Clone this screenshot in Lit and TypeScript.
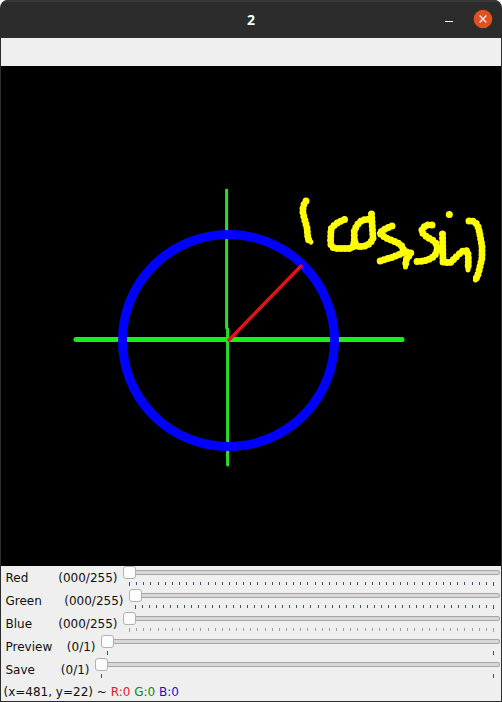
import { LitElement, html, css, svg } from "lit";
import { customElement, property } from "lit/decorators.js";

@customElement("trackbar-row")
class TrackbarRow extends LitElement {
  @property() label = "";
  @property() value = "";
  @property({ type: Number }) lead = 0;
  @property({ type: Number }) steps = 1;
  @property({ type: Boolean }) muted = false;

  static styles = css`
    :host { display: flex; height: 23px; color: #101010; }
    .caption { display: flex; justify-content: space-between; box-sizing: border-box; padding: 4px 5.5px 0 4.5px; line-height: 16px; white-space: pre; flex: none; }
    .slider { flex: 1; min-width: 0; height: 23px; display: block; }
    .tick { stroke: #30566b; stroke-width: 1; }
    .muted .tick { stroke: #a0a0a0; }
    .track { fill: #d8d8d8; stroke: #a6a6a6; }
    .thumb { fill: #fcfcfc; stroke: #b2b2b2; }
  `;

  render() {
    const width = 500 - this.lead;
    const last = width - 7.5;
    const ticks = Array.from({ length: this.steps + 1 }, (_, i) => {
      const x = Math.round(6 + ((last - 6.5) * i) / this.steps) + 0.5;
      const end = i === 0 || i === this.steps;
      return svg`<line class="tick" x1=${x} x2=${x} y1="16" y2=${end ? 20 : 19} />`;
    });
    return html`
      <div class="caption" style="width:${this.lead}px"><span>${this.label}</span><span>${this.value}</span></div>
      <svg class="slider ${this.muted ? "muted" : ""}" viewBox="0 0 ${width} 23">
        <rect class="track" x="1.5" y="4.5" width=${width - 3} height="4" rx="1.5" />
        ${ticks}
        <rect class="thumb" x="0.5" y="0.5" width="12" height="12" rx="2.5" />
      </svg>`;
  }
}

const strokes = [
  "M306 201 Q301 208 304 217 L307 228 L308 239 L311 242",
  "M344.5 219.5 Q335 223 331 229 L330.5 243 Q332 248.5 337 248.5 L351 248.5 Q355.5 245 354 232 Q358 220 366 219.5 L371 219",
  "M371.5 214 L373 238 Q371 244 365 246 L358 247 Q355 244 354.5 240",
  "M392 226 L385 229 L379.5 233 L386 238 L398 243 Q405 247 403 253 L393 257 L380 261",
  "M403 251 L411 253 L406 260 L405.5 267",
  "M432 225 Q424 224 421.5 231 Q424 236 434 241 Q440 247 435 255 Q430 261 417 261.5",
  "M442.5 234 L443 262 L450 263 L458 255 Q464 249 467 251 Q469 253 468 270",
  "M449.3 214.5 L449.5 214.5",
  "M469 221 Q477 220 479 230 L482 246 L482 258 L478.5 273 L475.5 280",
];

@customElement("app-root")
class AppRoot extends LitElement {
  static styles = css`
    :host { display: block; width: 502px; height: 702px; background: #fff; font: 12px/16px "DejaVu Sans", sans-serif; }
    .window { box-sizing: border-box; height: 702px; display: flex; flex-direction: column; background: #2c2c2c; border-radius: 8px 8px 0 0; overflow: hidden; }
    .title { box-sizing: border-box; height: 38px; flex: none; display: grid; grid-template-columns: 1fr auto 1fr; align-items: center; border-top: 2px solid #383838; color: #fff; font: bold 14px/18px "Open Sans", "Noto Sans", sans-serif; }
    .name { grid-column: 2; }
    .controls { justify-self: end; display: block; }
    .body { margin: 0 1px 1px; flex: 1; display: flex; flex-direction: column; background: #efefef; }
    .tools { height: 28px; flex: none; }
    .canvas { height: 500px; width: 500px; display: block; flex: none; background: #000; }
    .ink { fill: none; stroke: #ffff00; stroke-linecap: round; stroke-linejoin: round; stroke-width: 5; }
    .beads { stroke-width: 7; stroke-dasharray: 0 4; }
    .axis { stroke: #16f016; stroke-linecap: round; }
    .upright { stroke: #28e028; stroke-linecap: round; }
    .status { height: 20px; padding: 3px 0 0 2.5px; box-sizing: border-box; white-space: pre; color: #101010; }
    .r { color: #e01b24; }
    .g { color: #0a8a0a; }
    .b { color: #1414c8; }
  `;

  render() {
    return html`
      <div class="window">
        <div class="title">
          <span class="name">2</span>
          <svg class="controls" width="64" height="36" viewBox="438 2 64 36">
            <path d="M445 21.5h8" stroke="#fff" stroke-width="1.2" />
            <circle cx="483" cy="19" r="9.3" fill="#e2501f" />
            <path d="M479.6 15.6l6.8 6.8M486.4 15.6l-6.8 6.8" stroke="#fbe6de" stroke-width="1.4" />
          </svg>
        </div>
        <div class="body">
          <div class="tools"></div>
          <svg class="canvas" viewBox="1 66 500 500">
            <path class="axis" d="M76 339.5H402" stroke-width="5" />
            <path class="upright" d="M226.6 190V328M227.6 329V465" stroke-width="3" />
            <circle cx="228.5" cy="340.5" r="106" fill="none" stroke="#0000ff" stroke-width="9" />
            <path d="M229 340L301 266" stroke="#e01414" stroke-width="3.4" stroke-linecap="round" />
            ${strokes.map((d) => svg`<path class="ink" d=${d} /><path class="ink beads" d=${d} />`)}
          </svg>
          <trackbar-row label="Red" value="(000/255)" .lead=${122} .steps=${51}></trackbar-row>
          <trackbar-row label="Green" value="(000/255)" .lead=${128} .steps=${51}></trackbar-row>
          <trackbar-row label="Blue" value="(000/255)" .lead=${122} .steps=${51} muted></trackbar-row>
          <trackbar-row label="Preview" value="(0/1)" .lead=${100}></trackbar-row>
          <trackbar-row label="Save" value="(0/1)" .lead=${94}></trackbar-row>
          <div class="status">(x=481, y=22) ~ <span class="r">R:0</span> <span class="g">G:0</span> <span class="b">B:0</span></div>
        </div>
      </div>`;
  }
}
